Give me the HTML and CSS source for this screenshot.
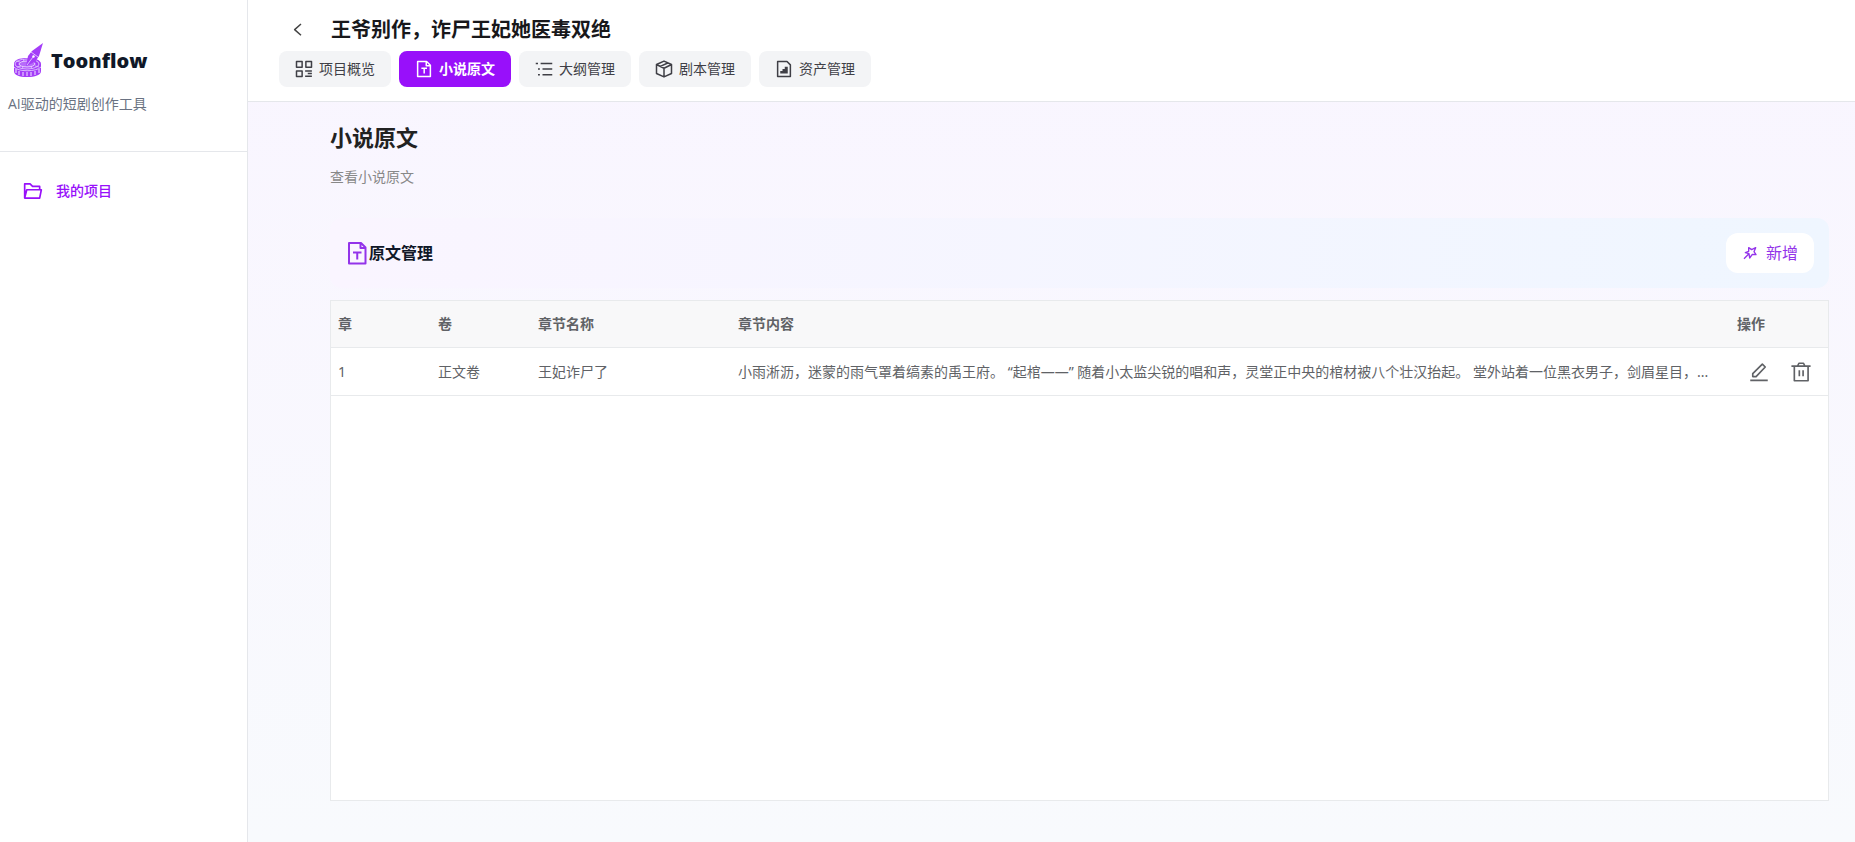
FILE: index.html
```
<!DOCTYPE html>
<html lang="zh-CN">
	<head>
		<meta charset="UTF-8">
		<meta name="viewport" content="width=device-width, initial-scale=1.0">
		<title>Toonflow</title>
		<link rel="stylesheet" href="styles.css">
	</head>
	<body>
		<div class="layout">
			<aside class="sidebar">
				<div class="brand">
					<a class="brand-name" href="#">
						<svg class="logo" viewBox="0 0 32 36" aria-hidden="true">
							<path class="logo-body" d="M2 21c0-4 5-6 13-6s14 2 14 6v7c0 4-6 6-14 6S2 32 2 28z"/>
							<ellipse class="logo-rim" cx="15" cy="21" rx="12" ry="5"/>
							<ellipse class="logo-dish" cx="15" cy="21" rx="8" ry="3"/>
							<path class="logo-cuts" d="M4 26v4M7 28v4M11 29v4M15 29v4M19 29v4M23 28v4M27 26v4"/>
							<path class="logo-rim" d="M2 24c4 5 22 5 27 0"/>
							<path class="logo-rim" d="M4 18l4 1M23 23l4 1M5 24l4-1M11 16l1 2M10 26l1-2M20 26l-1-2"/>
							<path class="logo-pen" d="M31 0L20 8l-4 5-2 10 9-4 4-6z"/>
							<path class="logo-rim" d="M15 22l6-8M19 9l7 5"/>
							<circle class="logo-hole" cx="21.500" cy="13.500" r="1.200"/>
						</svg>
						<span>Toonflow</span>
					</a>
					<p class="slogan">AI驱动的短剧创作工具</p>
				</div>
				<nav class="menu">
					<a class="menu-item" href="#">
						<svg class="icon-20" viewBox="0 0 48 48" aria-hidden="true">
							<path d="M4 41V7h13l6 6h17v8M4 41l5-20h35l-4 20H4z"/>
						</svg>
						<span>我的项目</span>
					</a>
				</nav>
			</aside>

			<div class="main">
				<header class="header">
					<div class="title-row">
						<button class="back" aria-label="返回">
							<svg class="icon-18" viewBox="0 0 48 48" aria-hidden="true"><path d="M32 8L15 23l17 15"/></svg>
						</button>
						<h1 class="title">王爷别作，诈尸王妃她医毒双绝</h1>
					</div>
					<nav class="tabs">
						<button class="tab">
							<svg class="icon-18" viewBox="0 0 48 48" aria-hidden="true">
								<path d="M4 4h15v15H4zM29 4h15v15H29zM4 29h15v15H4zM27 29h18M34 36h11M27 43h18"/>
							</svg>
							<span>项目概览</span>
						</button>
						<button class="tab active">
							<svg class="icon-18" viewBox="0 0 48 48" aria-hidden="true">
								<path d="M7 4h24l10 10v30H7zM30 4v11h11M17 22h15M24.500 22v14"/>
							</svg>
							<span>小说原文</span>
						</button>
						<button class="tab">
							<svg class="icon-18" viewBox="0 0 48 48" aria-hidden="true">
								<path d="M2 9h6M15 9h31M8 24h5M20 24h26M8 39h5M20 39h26"/>
							</svg>
							<span>大纲管理</span>
						</button>
						<button class="tab">
							<svg class="icon-18" viewBox="0 0 48 48" aria-hidden="true">
								<path d="M24 3l20 9v24L24 45 4 36V12zM4 12l20 10 20-10M24 22v23M34 8L14 17"/>
							</svg>
							<span>剧本管理</span>
						</button>
						<button class="tab">
							<svg class="icon-18" viewBox="0 0 48 48" aria-hidden="true">
								<path d="M7 4h25l9 9v31H7z"/>
								<path class="fill" d="M14 29h6v-5h6v-6h8v18H14z"/>
							</svg>
							<span>资产管理</span>
						</button>
					</nav>
				</header>

				<main class="content">
					<h2 class="page-title">小说原文</h2>
					<p class="page-desc">查看小说原文</p>

					<section class="toolbar">
						<h3 class="toolbar-title">
							<svg class="icon-24" viewBox="0 0 48 48" aria-hidden="true">
								<path d="M8 4h24l9 9v32H8zM31 4v10h10M16 23h17M24.500 23v14"/>
							</svg>
							<span>原文管理</span>
						</h3>
						<button class="add">
							<svg class="icon-16" viewBox="0 0 48 48" aria-hidden="true">
								<path d="M6 41l14-14M20 8l9 6 12-6-5 12 6 9-11-1-8 11-2-13-11-3 10-4z"/>
							</svg>
							<span>新增</span>
						</button>
					</section>

					<div class="table-box">
						<table class="table">
							<thead>
								<tr>
									<th class="col-small">章</th>
									<th class="col-small">卷</th>
									<th class="col-name">章节名称</th>
									<th>章节内容</th>
									<th class="col-action">操作</th>
								</tr>
							</thead>
							<tbody>
								<tr>
									<td>1</td>
									<td>正文卷</td>
									<td>王妃诈尸了</td>
									<td class="text">小雨淅沥，迷蒙的雨气罩着缟素的禹王府。 “起棺——” 随着小太监尖锐的唱和声，灵堂正中央的棺材被八个壮汉抬起。 堂外站着一位黑衣男子，剑眉星目，...</td>
									<td>
										<div class="actions">
											<button class="action" aria-label="编辑">
												<svg class="icon-20" viewBox="0 0 48 48" aria-hidden="true">
													<path d="M3 44h42M9 28v7h8L39 12l-7-7z"/>
												</svg>
											</button>
											<button class="action" aria-label="删除">
												<svg class="icon-20" viewBox="0 0 48 48" aria-hidden="true">
													<path d="M8 10v35h33V10zM1 10h46M16 9l3-6h11l3 6M20 20v14M29 20v14"/>
												</svg>
											</button>
										</div>
									</td>
								</tr>
							</tbody>
						</table>
					</div>
				</main>
			</div>
		</div>
	</body>
</html>
```

FILE: styles.css
```
*
{
	box-sizing: border-box;
}

body
{
	margin: 0;
	font-family: "Noto Sans", "Noto Sans CJK SC", sans-serif;
	font-size: 14px;
	line-height: 20px;
	color: #101828;
}

h1, h2, h3, p
{
	margin: 0;
}

button
{
	border: 0;
	padding: 0;
	background: none;
	font: inherit;
	color: inherit;
	cursor: pointer;
}

a
{
	color: inherit;
	text-decoration: none;
}

svg
{
	flex: none;
	fill: none;
	stroke: currentColor;
	stroke-width: 4;
	stroke-linejoin: round;
}

.fill
{
	fill: currentColor;
	stroke: none;
}

.icon-16
{
	width: 16px;
	height: 16px;
}

.icon-18
{
	width: 18px;
	height: 18px;
}

.icon-20
{
	width: 20px;
	height: 20px;
}

.icon-24
{
	width: 24px;
	height: 24px;
}

.layout
{
	display: flex;
	min-height: 100vh;
}

/* sidebar */

.sidebar
{
	flex: none;
	width: 248px;
	background-color: #ffffff;
	border-right: 1px solid #e5e7eb;
}

.brand
{
	height: 152px;
	padding: 40px 8px 0;
	border-bottom: 1px solid #e5e7eb;
}

.brand-name
{
	display: flex;
	align-items: center;
	gap: 7px;
	padding-left: 4px;
	height: 42px;
	font-family: "Open Sans", "Noto Sans", sans-serif;
	font-size: 20px;
	font-weight: 800;
}

.logo
{
	width: 32px;
	height: 36px;
	stroke-width: 1;
}

.logo-body, .logo-pen
{
	fill: #a43df8;
	stroke: none;
}

.logo-rim
{
	stroke: #dcbcff;
}

.logo-dish
{
	fill: #b76bfa;
	stroke: #ead5ff;
}

.logo-cuts
{
	stroke: #f3e8ff;
	stroke-width: 1;
}

.logo-hole
{
	fill: #ffffff;
	stroke: none;
}

.slogan
{
	margin-top: 12px;
	font-family: "Open Sans", "Noto Sans CJK SC", sans-serif;
	color: #6a7282;
}

.menu
{
	padding: 29px 23px;
}

.menu-item
{
	display: flex;
	align-items: center;
	gap: 13px;
	color: #9810fa;
	font-weight: 500;
}

/* header */

.main
{
	flex: 1;
	min-width: 0;
	display: flex;
	flex-direction: column;
	background: linear-gradient(to bottom, #f9f5ff, #f8fafd);
}

.header
{
	height: 102px;
	padding: 15px 31px 14px;
	background-color: #ffffff;
	border-bottom: 1px solid #e5e7eb;
}

.title-row
{
	display: flex;
	align-items: center;
	gap: 24px;
	padding-left: 10px;
	margin-bottom: 6px;
}

.back
{
	display: flex;
	color: #444444;
}

.title
{
	font-size: 20px;
	line-height: 30px;
	font-weight: 700;
	color: #18181b;
}

.tabs
{
	display: flex;
	gap: 8px;
}

.tab
{
	display: flex;
	align-items: center;
	gap: 6px;
	height: 36px;
	padding: 0 16px;
	border-radius: 8px;
	background-color: #f3f4f6;
	color: #3f3f46;
}

.active
{
	background-color: #9810fa;
	color: #ffffff;
	font-weight: 700;
}

/* content */

.content
{
	flex: 1;
	display: flex;
	flex-direction: column;
	padding: 19px 26px 41px 82px;
}

.page-title
{
	font-size: 22px;
	line-height: 32px;
	font-weight: 700;
	color: #222222;
}

.page-desc
{
	margin-top: 14px;
	color: #888888;
}

.toolbar
{
	display: flex;
	align-items: center;
	justify-content: space-between;
	height: 70px;
	margin: 31px 0 12px;
	padding: 0 15px;
	border-radius: 12px;
	background: linear-gradient(to right, #faf5ff, #eff6ff);
}

.toolbar-title
{
	display: flex;
	align-items: center;
	font-size: 16px;
	font-weight: 700;
}

.toolbar-title svg
{
	color: #9333ea;
}

.add
{
	display: flex;
	align-items: center;
	justify-content: center;
	gap: 8px;
	width: 88px;
	height: 40px;
	border-radius: 12px;
	background-color: #ffffff;
	color: #9333ea;
	font-size: 16px;
}

.table-box
{
	flex: 1;
	border: 1px solid #e8eaec;
	background-color: #ffffff;
}

.table
{
	width: 100%;
	table-layout: fixed;
	border-collapse: separate;
	border-spacing: 0;
	color: #606266;
}

.table th, .table td
{
	height: 48px;
	padding: 0 7px;
	border-bottom: 1px solid #e8eaec;
	text-align: left;
}

.table th
{
	height: 47px;
	background-color: #f8f8f9;
	font-weight: 700;
}

.col-small
{
	width: 100px;
}

.col-name
{
	width: 200px;
}

.col-action
{
	width: 98px;
}

.text
{
	white-space: nowrap;
}

.actions
{
	display: flex;
	justify-content: flex-end;
	gap: 22px;
	padding-right: 10px;
}

.action
{
	display: flex;
}
```
